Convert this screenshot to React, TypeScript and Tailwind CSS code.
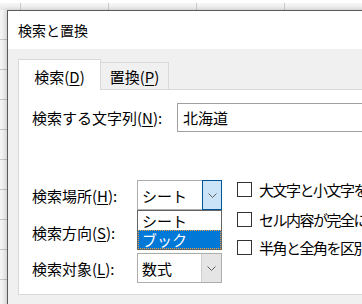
import React from "react";

const font = "font-['Meiryo_UI','Noto_Sans_CJK_JP',sans-serif]";

function Chevron() {
  return (
    <svg width="9" height="5" viewBox="0 0 9 5" fill="none">
      <polyline points="0.5,0.5 4.5,4.5 8.5,0.5" stroke="#606060" strokeWidth="1" />
    </svg>
  );
}

function Key({ k }: { k: string }) {
  return <span className="underline underline-offset-2 decoration-1">{k}</span>;
}

function Label({ text, k }: { text: string; k: string }) {
  return (
    <div className="w-[105px] h-[30px] flex items-center text-[15px] leading-none whitespace-nowrap">
      {text}(<Key k={k} />):
    </div>
  );
}

function Combo({ value, active }: { value: string; active?: boolean }) {
  return (
    <div className="w-[85px] h-[30px] flex border border-[#adadad] bg-white">
      <div className="flex-1 flex items-center pl-[4px] text-[15px] leading-none">{value}</div>
      <div
        className={
          active
            ? "w-[20px] -my-px -mr-px h-[30px] flex items-center justify-center bg-[#cce4f7] border border-[#005499]"
            : "w-[20px] h-full flex items-center justify-center bg-[#e5e5e5] border-l border-[#cfcfcf]"
        }
      >
        <Chevron />
      </div>
    </div>
  );
}

function Check({ text }: { text: string }) {
  return (
    <div className="h-[28px] flex items-center gap-[7px] whitespace-nowrap">
      <div className="w-[15px] h-[15px] border border-[#333333] bg-white shrink-0" />
      <span className="text-[15px] leading-none tracking-[-1.5px]">{text}</span>
    </div>
  );
}

export default function App() {
  return (
    <div className={`relative w-[362px] h-[304px] overflow-hidden bg-white text-black ${font}`}>
      {/* spreadsheet behind the dialog */}
      <div className="h-[10px] border-t-[3px] border-white bg-[linear-gradient(#f7f7f7,#e6e6e6)] bg-[#ededed] flex">
        <div className="w-[21px] border-r border-[#c8c8c8]" />
        <div className="w-[88px] border-r border-[#c8c8c8]" />
        <div className="w-[88px] border-r border-[#c8c8c8]" />
        <div className="w-[88px] border-r border-[#c8c8c8]" />
      </div>
      <div className="w-[7px] h-[294px] bg-[#f4f4f4] bg-[repeating-linear-gradient(#f4f4f4_0px,#f4f4f4_29px,#c8c8c8_29px,#c8c8c8_30px)]" />

      {/* dialog window */}
      <div className="absolute left-[7px] top-[10px] w-[420px] h-[320px] border-l border-t border-[#5a5a5a] shadow-[-2px_0_4px_rgba(0,0,0,0.15)] flex flex-col">
        <div className="h-[38px] bg-white flex items-center pl-[10px] text-[14px] leading-none">検索と置換</div>
        <div className="flex-1 bg-[#f0f0f0] pt-[10px] pl-[10px]">
          {/* tabs */}
          <div className="flex items-end h-[30px]">
            <div className="w-[83px] h-[31px] -mb-px relative z-10 bg-white border border-b-0 border-[#d9d9d9] flex items-center justify-center pt-[2px] text-[15px] leading-none">
              検索(<Key k="D" />)
            </div>
            <div className="w-[68px] h-[27px] border-t border-r border-[#d9d9d9] flex items-center justify-center text-[15px] leading-none">
              置換(<Key k="P" />)
            </div>
          </div>
          {/* tab page */}
          <div className="relative h-[206px] bg-white border border-[#d9d9d9] pl-[13px] pt-[13px]">
            <div className="flex items-center h-[29px]">
              <div className="w-[145px] text-[15px] leading-none whitespace-nowrap">
                検索する文字列(<Key k="N" />):
              </div>
              <div className="flex-1 h-[29px] border border-[#a0a0a0] flex items-center pl-[5px] text-[15px] leading-none">
                北海道
              </div>
            </div>

            <div className="flex mt-[48px]">
              <div className="flex flex-col gap-[7px]">
                <div className="flex">
                  <Label text="検索場所" k="H" />
                  <Combo value="シート" active />
                </div>
                <div className="flex">
                  <Label text="検索方向" k="S" />
                  <Combo value="" />
                </div>
                <div className="flex -mt-px">
                  <Label text="検索対象" k="L" />
                  <Combo value="数式" />
                </div>
              </div>
              <div className="flex flex-col pl-[15px] -mt-[5px]">
                <Check text="大文字と小文字を区別する" />
                <div className="h-[2px]" />
                <Check text="セル内容が完全に同一であるものを検索する" />
                <Check text="半角と全角を区別する" />
              </div>
            </div>

            {/* open dropdown list */}
            <div className="absolute left-[118px] top-[120px] w-[85px] h-[40px] border border-[#646464] bg-white text-[15px] leading-none">
              <div className="h-[19px] flex items-center pl-[4px]">シート</div>
              <div className="h-[19px] flex items-center pl-[4px] bg-[#0078d7] text-white outline-1 outline-dotted outline-[#f0a040] -outline-offset-1">
                ブック
              </div>
            </div>
          </div>
        </div>
      </div>
    </div>
  );
}
